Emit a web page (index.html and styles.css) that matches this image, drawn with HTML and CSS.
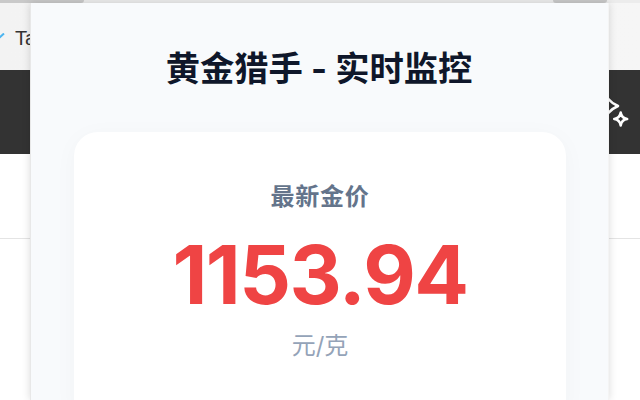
FILE: index.html
```html
<!DOCTYPE html>
<html lang="zh">
<head>
<meta charset="utf-8">
<title>黄金猎手</title>
<link rel="stylesheet" href="styles.css">
</head>
<body>
<div class="backdrop">
  <div class="tabstrip">
    <div class="top-edge">
      <div class="pill pill-left"></div>
      <div class="pill pill-right"></div>
    </div>
    <div class="tab-row">
      <svg class="tab-icon" width="6" height="10" viewBox="0 0 6 10"><path d="M-3 2 L-0.500 4.500 L4 0.500" fill="none" stroke="#4db5f0" stroke-width="2"/></svg>
      <span class="tab-text">Ta</span>
    </div>
  </div>
  <div class="darkbar">
    <svg class="spark" width="32" height="40" viewBox="0 0 32 40"><path d="M-4 -2 C-2 6 1 11 10 15 C1 19 -2 24 -4 32" fill="none" stroke="#fff" stroke-width="2.500" stroke-linejoin="round"/><path d="M12.700 21.500 C13.300 25.500 15 27.400 19.200 28 C15 28.600 13.300 30.500 12.700 34.500 C12.100 30.500 10.400 28.600 6.200 28 C10.400 27.400 12.100 25.500 12.700 21.500Z" fill="none" stroke="#fff" stroke-width="2.500" stroke-linejoin="round"/></svg>
  </div>
  <div class="lower"></div>
</div>
<main class="modal">
  <h1 class="title">黄金猎手 - 实时监控</h1>
  <section class="card">
    <div class="label">最新金价</div>
    <div class="price">1153.94</div>
    <div class="unit">元/克</div>
  </section>
</main>
</body>
</html>
```
FILE: styles.css
```css
* { box-sizing: border-box; }
html, body { margin: 0; height: 100%; overflow: hidden; }
body { position: relative; width: 640px; height: 400px; font-family: Inter, "Noto Sans CJK SC", sans-serif; background: #fff; }
.backdrop { display: flex; flex-direction: column; height: 400px; }
.tabstrip { height: 70px; background: linear-gradient(90deg, #f3f3f3, #f6f6f6); flex: none; }
.top-edge { height: 3px; display: flex; justify-content: space-between; background: #ececec; padding-right: 33px; }
.pill { height: 3px; background: #c9c9c9; }
.pill-left { width: 84px; border-radius: 0 0 6px 0; }
.pill-right { width: 54px; border-radius: 0 0 8px 8px; }
.tab-row { display: flex; align-items: center; gap: 9px; padding-top: 23px; }
.tab-icon { flex: none; }
.tab-text { font-family: "Liberation Sans", sans-serif; font-size: 20px; line-height: 24px; color: #333; }
.darkbar { height: 84px; background: #333; flex: none; display: flex; justify-content: flex-end; }
.spark { margin: 21px 0 0; }
.lower { height: 85px; background: #fff; border-bottom: 1px solid #e4e4e4; flex: none; }
.modal { position: absolute; left: 30px; top: 3px; width: 579px; height: 397px; overflow: hidden; background: #f8fafc; padding: 0 42px 0 43px; box-shadow: 0 0 8px rgba(0,0,0,.15); border-left: 1px solid #e8e8e8; border-right: 1px solid #f4f4f4; }
.title { margin: 0 2px 0 0; padding-top: 44px; height: 129px; text-align: center; font-size: 34.3px; line-height: 44px; font-weight: 700; color: #0f172a; }
.card { background: #fff; height: 290px; border-radius: 24px; text-align: center; padding-top: 49px; box-shadow: 0 4px 24px rgba(0,0,0,.03); }
.label { font-size: 24px; letter-spacing: .8px; line-height: 32px; font-weight: 700; color: #64748b; }
.price { font-size: 81px; letter-spacing: -1.5px; line-height: 96px; font-weight: 700; color: #ef4444; margin-top: 14px; }
.unit { font-size: 24px; line-height: 32px; color: #94a3b8; margin-top: 7px; }
```
